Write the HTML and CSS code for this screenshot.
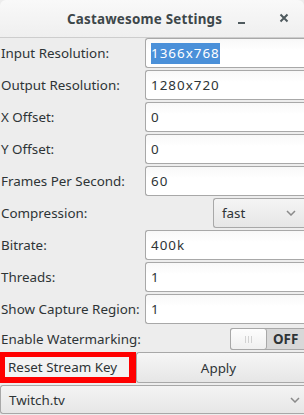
FILE: index.html
```html
<!DOCTYPE html>
<html>
<head>
<meta charset="utf-8">
<link rel="stylesheet" href="styles.css">
</head>
<body>
<div class="window">
  <header class="titlebar">
    <span class="title">Castawesome Settings</span>
    <span class="wbtn min"><svg width="10" height="10" viewBox="0 0 10 10"><rect x="1" y="7" width="7" height="2" fill="#4f5a5e"/></svg></span>
    <span class="wbtn close"><svg width="10" height="10" viewBox="0 0 10 10"><path d="M1.5 1.5 L8.5 8.5 M8.5 1.5 L1.5 8.5" stroke="#4f5a5e" stroke-width="2"/></svg></span>
  </header>
  <main class="form">
    <label class="lbl">Input Resolution:</label>
    <div class="entry"><span class="sel">1366x768</span></div>
    <label class="lbl">Output Resolution:</label>
    <div class="entry">1280x720</div>
    <label class="lbl">X Offset:</label>
    <div class="entry">0</div>
    <label class="lbl">Y Offset:</label>
    <div class="entry">0</div>
    <label class="lbl">Frames Per Second:</label>
    <div class="entry">60</div>
    <label class="lbl">Compression:</label>
    <div class="right"><div class="combo small"><span>fast</span><svg class="chev" width="10" height="6" viewBox="0 0 10 6"><path d="M1 1 L5 5 L9 1" fill="none" stroke="#8a8a8a" stroke-width="1.5"/></svg></div></div>
    <label class="lbl">Bitrate:</label>
    <div class="entry">400k</div>
    <label class="lbl">Threads:</label>
    <div class="entry">1</div>
    <label class="lbl">Show Capture Region:</label>
    <div class="entry">1</div>
    <label class="lbl wm">Enable Watermarking:</label>
    <div class="right wm"><div class="switch"><span class="knob"><i></i><i></i><i></i></span><span class="off">OFF</span></div></div>
  </main>
  <div class="buttons">
    <div class="redbox"><button class="btn reset">Reset Stream Key</button></div>
    <button class="btn apply">Apply</button>
  </div>
  <div class="combo wide"><span>Twitch.tv</span><svg class="chev" width="10" height="6" viewBox="0 0 10 6"><path d="M1 1 L5 5 L9 1" fill="none" stroke="#8a8a8a" stroke-width="1.5"/></svg></div>
</div>
</body>
</html>
```
FILE: styles.css
```css
html, body {
  margin: 0;
  padding: 0;
  background: #ededed;
}
body {
  font-family: "Noto Sans", "DejaVu Sans", sans-serif;
  font-size: 13.4px;
  color: #2e3436;
}
.window {
  width: 304px;
  height: 415px;
  background: #ededed;
  display: flex;
  flex-direction: column;
  overflow: hidden;
}
.titlebar {
  height: 37px;
  border-bottom: 1px solid #cdcdcd;
  background: linear-gradient(#f9f9f9, #efefef);
  border-radius: 6px 6px 0 0;
  display: flex;
  align-items: center;
  flex-shrink: 0;
}
.title {
  font-weight: bold;
  color: #3d474a;
  margin-left: 67px;
  flex: 1;
  letter-spacing: 0.2px;
}
.wbtn {
  width: 10px;
  height: 10px;
  display: flex;
}
.min { margin-right: 32px; margin-top: 2px; }
.close { margin-right: 15px; margin-top: -2px; }
.form {
  display: grid;
  grid-template-columns: 145px 1fr;
  grid-template-rows: repeat(9, 30px) 24px;
  row-gap: 2px;
}
.lbl {
  display: flex;
  align-items: center;
  padding-left: 1px;
  white-space: nowrap;
}
.entry {
  border: 1px solid #a8a8a8;
  border-right: none;
  border-radius: 3px 0 0 3px;
  background: linear-gradient(#f8f8f8, #ffffff 40%);
  display: flex;
  align-items: center;
  padding-left: 5px;
  box-sizing: border-box;
  height: 30px;
  letter-spacing: 1px;
}
.sel {
  background: #4a90d9;
  color: #fff;
  padding: 1px 0 2px;
}
.right {
  display: flex;
  justify-content: flex-end;
  align-items: center;
}
.combo {
  border: 1px solid #a8a8a8;
  border-radius: 3px;
  background: linear-gradient(#f4f4f4, #e6e6e6);
  box-sizing: border-box;
  display: flex;
  align-items: center;
  justify-content: space-between;
  padding: 0 8px;
}
.combo.small {
  width: 91px;
  height: 30px;
  border-right: none;
  border-radius: 3px 0 0 3px;
}
.right.wm { align-items: flex-end; }
.lbl.wm { padding-top: 2px; }
.switch {
  width: 74px;
  height: 22px;
  border: 1px solid #a8a8a8;
  border-right: none;
  border-radius: 3px 0 0 3px;
  background: #d8d8d8;
  box-sizing: border-box;
  display: flex;
  align-items: center;
}
.knob {
  width: 37px;
  height: 22px;
  margin: -1px 0 -1px -1px;
  border: 1px solid #a8a8a8;
  border-radius: 3px;
  background: linear-gradient(#fdfdfd, #f0f0f0);
  box-sizing: border-box;
  display: flex;
  justify-content: center;
  align-items: center;
  gap: 2px;
}
.knob i {
  width: 1px;
  height: 7px;
  background: #d2d2d2;
}
.off {
  font-weight: bold;
  margin-left: 6px;
  color: #2e3436;
}
.buttons {
  display: flex;
  margin-top: 2px;
  height: 31px;
}
.redbox {
  width: 136px;
  box-sizing: border-box;
  border: 5px solid #ff0000;
  border-right-width: 7px;
  border-bottom-width: 6px;
  display: flex;
}
.btn {
  font: inherit;
  color: #2e3436;
  margin: 0;
  padding: 0;
  box-sizing: border-box;
}
.reset {
  flex: 1;
  border: none;
  background: #f3f3f3;
  text-align: left;
  padding-left: 3px;
  white-space: nowrap;
}
.apply {
  flex: 1;
  border: 1px solid #a8a8a8;
  border-right: none;
  border-radius: 3px 0 0 3px;
  background: linear-gradient(#f6f6f6, #e6e6e6);
  padding-right: 4px;
}
.combo.wide {
  margin-top: 2px;
  height: 29px;
  border-right: none;
  border-radius: 3px 0 0 3px;
  padding-right: 4px;
}
```
